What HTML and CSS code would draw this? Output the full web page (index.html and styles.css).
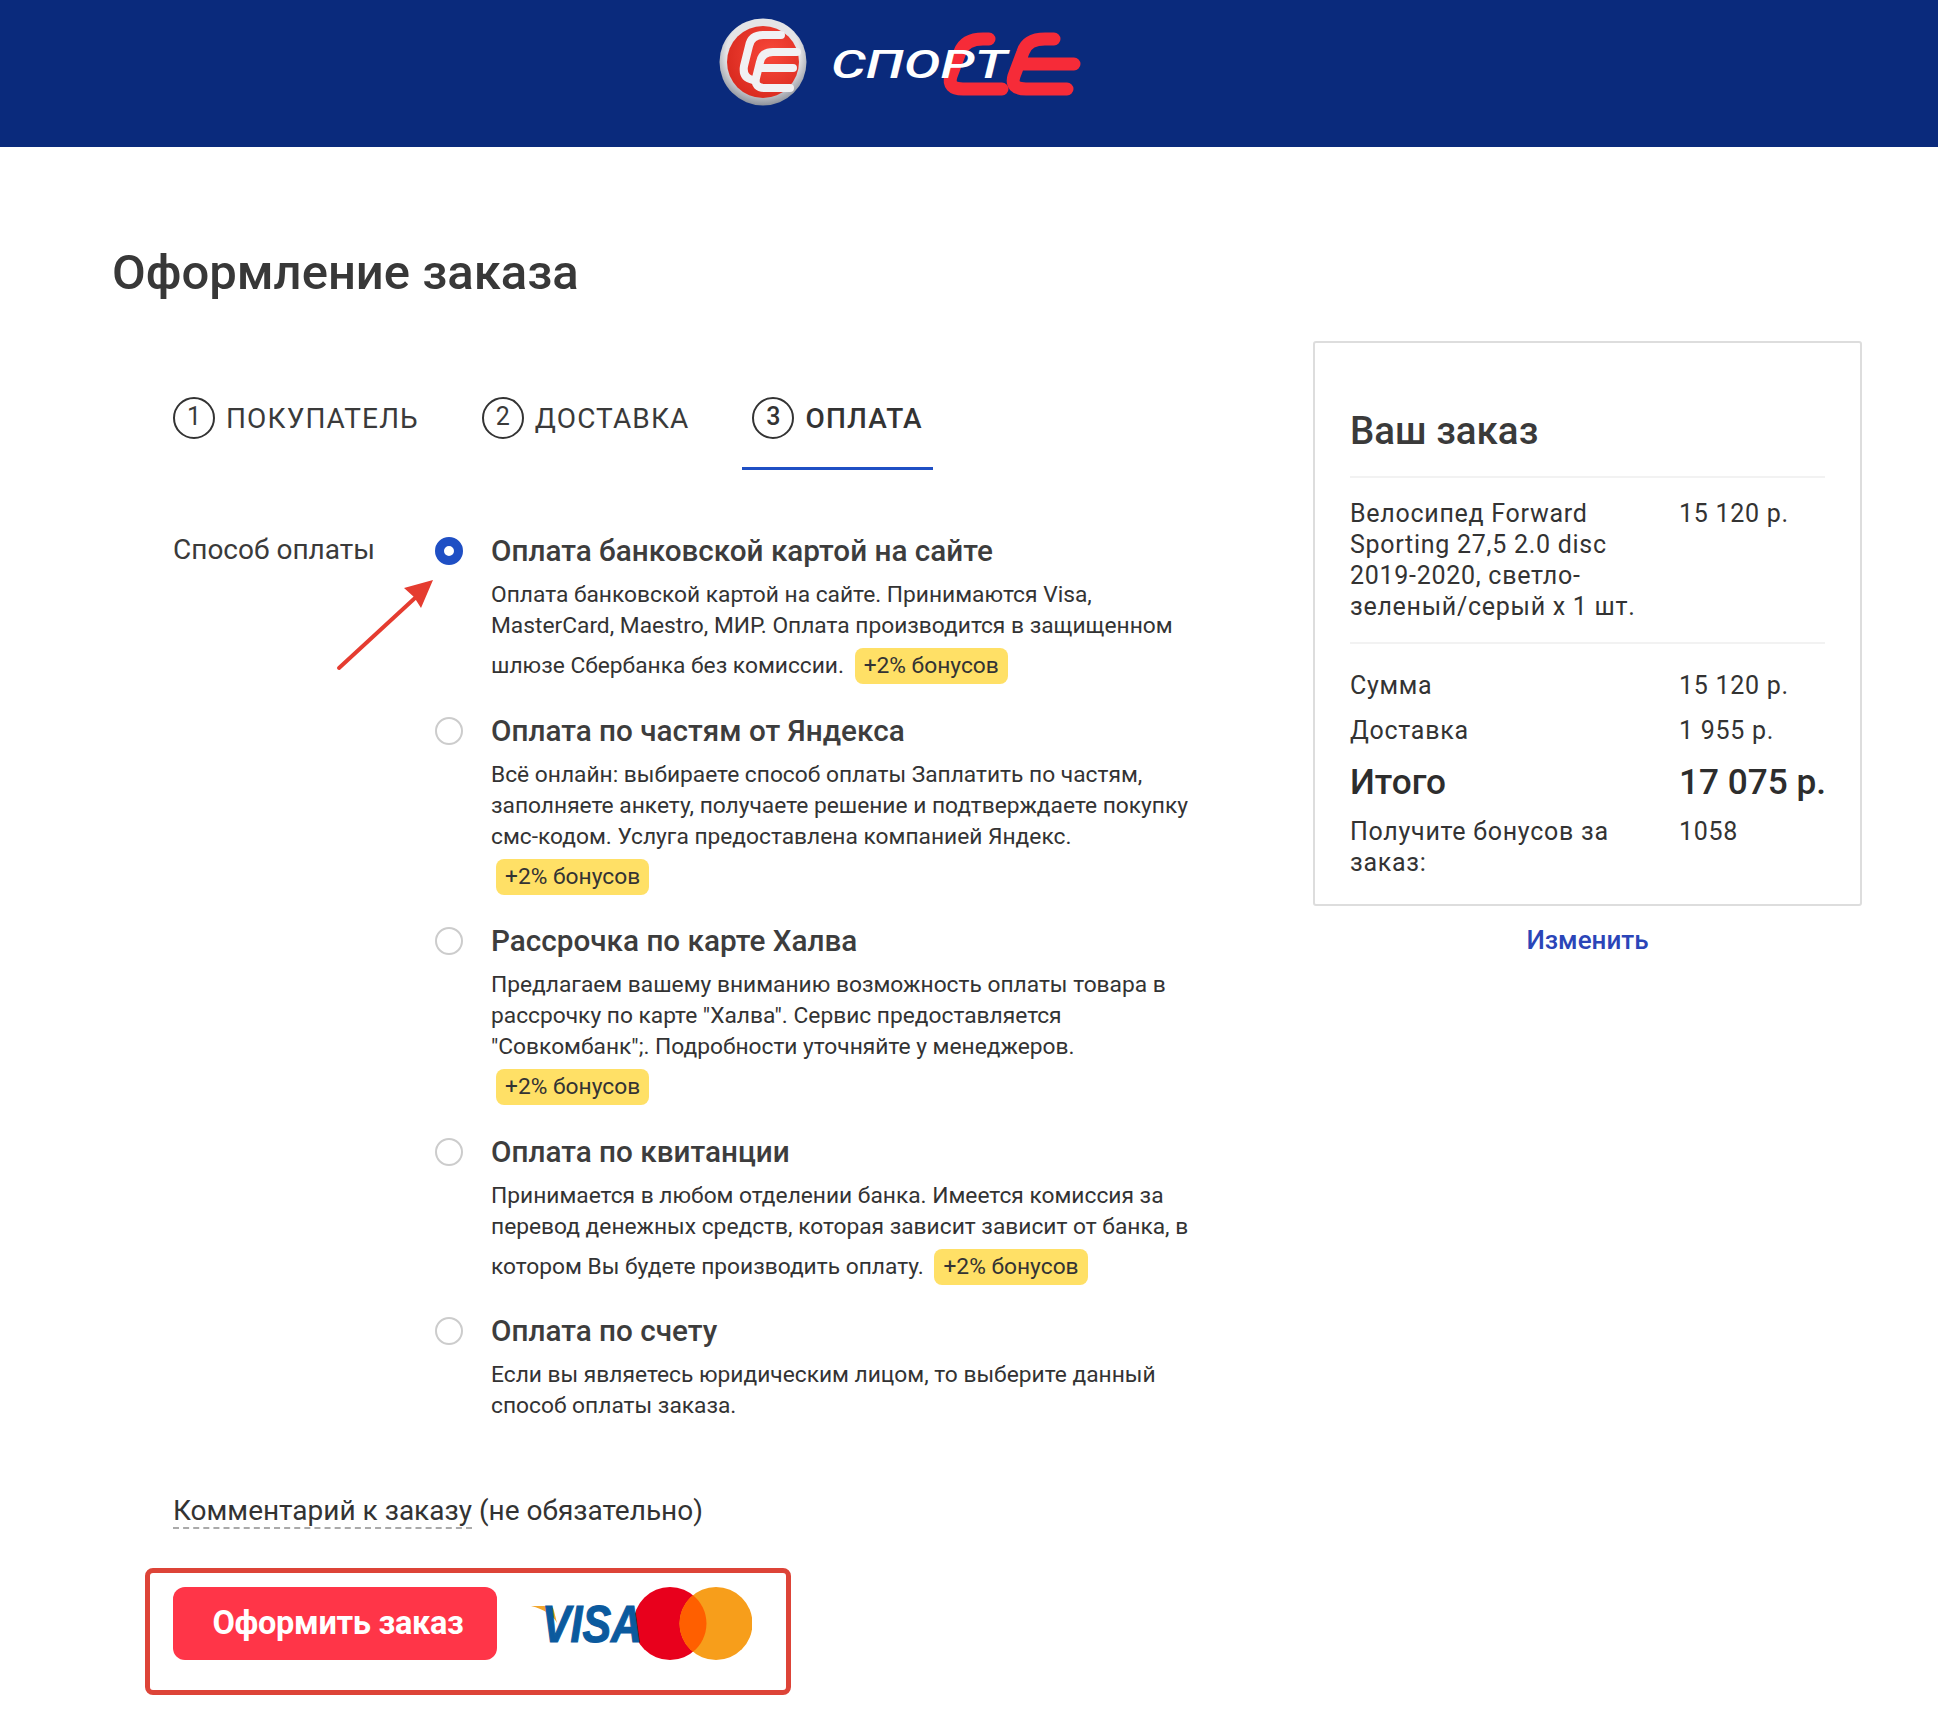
FILE: index.html
```html
<!DOCTYPE html>
<html lang="ru">
<head>
<meta charset="utf-8">
<title>Оформление заказа</title>
<link rel="stylesheet" href="styles.css">
</head>
<body>
<header class="site-header">
  <svg class="logo" width="370" height="100" viewBox="0 0 370 100" aria-label="СпортСЕ">
    <defs>
      <radialGradient id="ring" cx="50%" cy="40%" r="60%"><stop offset="0.7" stop-color="#e4e4e6"/><stop offset="1" stop-color="#8d929c"/></radialGradient>
      <radialGradient id="ball" cx="60%" cy="40%" r="65%"><stop offset="0" stop-color="#f9483a"/><stop offset="1" stop-color="#d92a1f"/></radialGradient>
    </defs>
    <circle cx="48" cy="52" r="43.5" fill="url(#ring)"/>
    <circle cx="48" cy="52" r="36" fill="url(#ball)"/>
    <path class="mark-white" d="M66 25H48Q36 25 34 36L29 56Q27 68 38 70"/>
    <path class="mark-white" d="M82 42H58Q47 42 45 52L41 68Q39 78 50 78H75M47 58H78"/>
    <path class="mark-red" d="M274 29H268Q250 29 245 42L236 66Q232 79 248 79H287"/>
    <path class="mark-red" d="M339 29H330Q312 29 308 42L299 66Q295 79 311 79H352M304 54H359"/>
    <text class="logo-text" x="116" y="68" textLength="176" lengthAdjust="spacingAndGlyphs">СПОРТ</text>
  </svg>
</header>

<main class="page">
  <h1 class="page-title">Оформление заказа</h1>
  <div class="columns">
    <section class="checkout">
      <nav class="tabs">
        <div class="tab"><span class="tab-num">1</span><span class="tab-text">ПОКУПАТЕЛЬ</span></div>
        <div class="tab"><span class="tab-num">2</span><span class="tab-text">ДОСТАВКА</span></div>
        <div class="tab tab-active"><span class="tab-num">3</span><span class="tab-text">ОПЛАТА</span></div>
      </nav>

      <div class="payment">
        <div class="payment-label">Способ оплаты</div>
        <div class="options">
          <svg class="arrow" width="110" height="100" viewBox="0 0 110 100">
            <path class="arrow-line" d="M6 94L82 24"/>
            <path class="arrow-head" d="M100 6L88 34L81 23L71 14Z"/>
          </svg>
          <div class="option">
            <span class="radio radio-on"></span>
            <div class="option-body">
              <div class="option-title">Оплата банковской картой на сайте</div>
              <p class="option-desc">Оплата банковской картой на сайте. Принимаются Visa, MasterCard, Maestro, МИР. Оплата производится в защищенном шлюзе Сбербанка без комиссии. <span class="badge">+2% бонусов</span></p>
            </div>
          </div>
          <div class="option">
            <span class="radio"></span>
            <div class="option-body">
              <div class="option-title">Оплата по частям от Яндекса</div>
              <p class="option-desc">Всё онлайн: выбираете способ оплаты Заплатить по частям, заполняете анкету, получаете решение и подтверждаете покупку смс-кодом. Услуга предоставлена компанией Яндекс. <span class="badge">+2% бонусов</span></p>
            </div>
          </div>
          <div class="option">
            <span class="radio"></span>
            <div class="option-body">
              <div class="option-title">Рассрочка по карте Халва</div>
              <p class="option-desc">Предлагаем вашему вниманию возможность оплаты товара в рассрочку по карте "Халва". Сервис предоставляется "Совкомбанк";. Подробности уточняйте у менеджеров. <span class="badge">+2% бонусов</span></p>
            </div>
          </div>
          <div class="option">
            <span class="radio"></span>
            <div class="option-body">
              <div class="option-title">Оплата по квитанции</div>
              <p class="option-desc">Принимается в любом отделении банка. Имеется комиссия за перевод денежных средств, которая зависит зависит от банка, в котором Вы будете производить оплату. <span class="badge">+2% бонусов</span></p>
            </div>
          </div>
          <div class="option">
            <span class="radio"></span>
            <div class="option-body">
              <div class="option-title">Оплата по счету</div>
              <p class="option-desc">Если вы являетесь юридическим лицом, то выберите данный способ оплаты заказа.</p>
            </div>
          </div>
        </div>
      </div>

      <div class="comment"><span class="comment-link">Комментарий к заказу</span> (не обязательно)</div>

      <div class="submit-box">
        <button class="submit" type="button">Оформить заказ</button>
        <svg class="cards" width="221" height="73" viewBox="0 0 221 73" aria-label="Visa, Mastercard">
          <circle cx="139" cy="36.5" r="36.5" fill="#e8001c"/>
          <circle cx="185" cy="36.5" r="36.5" fill="#f79e1b"/>
          <path d="M162 8.2A36.5 36.5 0 0 1 162 64.8A36.5 36.5 0 0 1 162 8.2Z" fill="#ff5f00"/>
          <path d="M0 19H18Q22 19 23 24L26 36Q20 24 0 19Z" fill="#f2a62c"/>
          <text class="visa-text" x="11" y="55" textLength="100" lengthAdjust="spacingAndGlyphs">VISA</text>
        </svg>
      </div>
    </section>

    <aside class="sidebar">
      <div class="summary">
        <h2 class="summary-title">Ваш заказ</h2>
        <div class="summary-row summary-item">
          <div class="summary-name">Велосипед Forward Sporting 27,5 2.0 disc 2019-2020, светло-зеленый/серый х 1 шт.</div>
          <div>15 120 р.</div>
        </div>
        <div class="summary-totals">
          <div class="summary-row"><div>Сумма</div><div>15 120 р.</div></div>
          <div class="summary-row"><div>Доставка</div><div>1 955 р.</div></div>
          <div class="summary-row summary-total"><div>Итого</div><div class="nowrap">17 075 р.</div></div>
          <div class="summary-row"><div class="summary-name">Получите бонусов за заказ:</div><div>1058</div></div>
        </div>
      </div>
      <a class="change-link" href="#">Изменить</a>
    </aside>
  </div>
</main>
</body>
</html>
```
FILE: styles.css
```css
* { box-sizing: border-box; }
html, body { margin: 0; padding: 0; background: #fff; }
body { font-family: Roboto, "Liberation Sans", sans-serif; color: #333; }

.site-header { height: 147px; background: #0a2a7c; padding: 10px 0 0 715px; }
.logo { display: block; }
.mark-white { fill: none; stroke: #f1f1f3; stroke-width: 8; stroke-linecap: round; stroke-linejoin: round; }
.mark-red { fill: none; stroke: #f62b38; stroke-width: 13; stroke-linecap: round; stroke-linejoin: round; }
.logo-text { font: italic 500 38px Roboto, sans-serif; fill: #fff; }

.page { padding: 0 76px 0 112px; }
.page-title { margin: 98px 0 40px; font-size: 49px; line-height: 56px; font-weight: 500; color: #383838; }
.columns { display: flex; justify-content: space-between; }
.checkout { padding: 56px 0 0 61px; }

.tabs { display: flex; gap: 43px; margin-left: -10px; }
.tab { display: flex; align-items: center; gap: 11px; height: 73px; padding: 0 10px 29px; font-size: 28px; letter-spacing: 1.15px; color: #3a3a3a; border-bottom: 3px solid transparent; }
.tab-text { padding-top: 2px; }
.tab-num { flex: none; width: 42px; height: 42px; padding-bottom: 3px; border: 2px solid #333; border-radius: 50%; display: flex; align-items: center; justify-content: center; font-size: 25px; letter-spacing: 0; }
.tab-active { font-weight: 500; color: #333; border-bottom-color: #1f4fc4; }

.payment { display: grid; grid-template-columns: 262px 1fr; margin-top: 62px; }
.payment-label { font-size: 28px; line-height: 36px; color: #3a3a3a; }
.options { position: relative; margin-top: 1.4px; }
.arrow { position: absolute; left: -102px; top: 40.6px; }
.arrow-line { fill: none; stroke: #e53c30; stroke-width: 4; stroke-linecap: round; }
.arrow-head { fill: #e53c30; }

.option { display: flex; gap: 28px; margin-bottom: 23.5px; }
.option:last-child { margin-bottom: 0; }
.radio { flex: none; width: 28px; height: 28px; margin-top: 4px; border: 2px solid #ccc; border-radius: 50%; background: #fff; }
.radio-on { border: 9px solid #1f4fc4; }
.option-body { width: 706px; }
.option-title { font-size: 29.7px; line-height: 36px; font-weight: 500; color: #3d3d3d; }
.option-desc { margin: 10px 0 0; font-size: 22.75px; line-height: 31px; color: #333; }
.badge { display: inline-block; height: 36px; line-height: 36px; margin: 7px 5px 5px; padding: 0 9px; border-radius: 8px; background: #ffe066; vertical-align: baseline; white-space: nowrap; }

.comment { margin-top: 71.6px; font-size: 28px; line-height: 36px; color: #333; }
.comment-link { border-bottom: 2px dashed #aaa; }

.submit-box { display: inline-flex; gap: 34px; margin: 39px 0 0 -28px; padding: 14px 34px 30px 23px; border: 5px solid #dd4438; border-radius: 8px; }
.submit { width: 324px; height: 73px; padding: 0 0 0 6px; border: 0; border-radius: 12px; background: #ff3548; color: #fff; font: 700 32.5px Roboto, sans-serif; letter-spacing: -0.3px; }
.cards { display: block; }
.visa-text { font: italic 700 52px "Liberation Sans", sans-serif; fill: #0b5a9e; stroke: #0b5a9e; stroke-width: 1.2; }

.sidebar { width: 549px; }
.summary { border: 2px solid #ddd; border-radius: 3px; height: 565px; padding: 0 35px; font-size: 25px; line-height: 31px; letter-spacing: 0.72px; color: #333; }
.summary-title { margin: 0; padding: 65px 0 23px; font-size: 38.5px; line-height: 45px; font-weight: 500; letter-spacing: 0; color: #3a3a3a; border-bottom: 2px solid #f2f2f2; }
.summary-row { display: grid; grid-template-columns: 329px 1fr; }
.summary-name { padding-right: 15px; }
.summary-item { padding: 20px 0; border-bottom: 2px solid #f2f2f2; }
.summary-totals { display: flex; flex-direction: column; gap: 14px; padding-top: 26px; }
.summary-total { margin-bottom: -3px; font-size: 35.2px; line-height: 45px; font-weight: 500; letter-spacing: 0; color: #2d2d2d; }
.nowrap { white-space: nowrap; }
.change-link { display: block; margin-top: 16px; text-align: center; font-size: 26px; line-height: 36px; font-weight: 500; color: #2b45b8; text-decoration: none; }
```
